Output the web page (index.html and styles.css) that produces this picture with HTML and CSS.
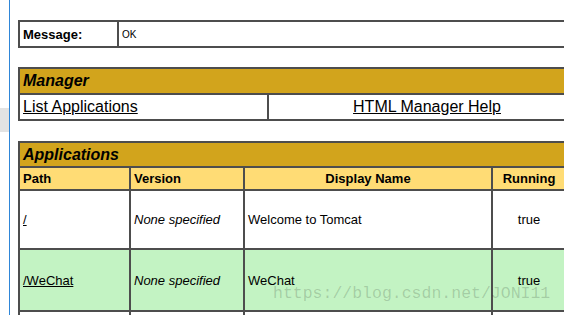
FILE: index.html
```html
<!DOCTYPE html>
<html lang="en">
<head>
  <meta charset="UTF-8">
  <title>Tomcat Web Application Manager</title>
  <link rel="stylesheet" href="styles.css">
</head>
<body>
  <div class="side">
    <div class="side-tab"></div>
  </div>
  <div class="main">
    <table class="msg">
      <colgroup>
        <col class="w-label">
        <col class="w-msg">
      </colgroup>
      <tr>
        <td><b>Message:</b></td>
        <td class="msg-text">OK</td>
      </tr>
    </table>

    <table class="mgr">
      <colgroup>
        <col class="w-half">
        <col class="w-half2">
      </colgroup>
      <tr>
        <td class="title" colspan="2">Manager</td>
      </tr>
      <tr class="row-link">
        <td><a href="#">List Applications</a></td>
        <td class="center"><a href="#">HTML Manager Help</a></td>
      </tr>
    </table>

    <table class="apps">
      <colgroup>
        <col class="w-path">
        <col class="w-ver">
        <col class="w-name">
        <col class="w-run">
        <col class="w-sess">
      </colgroup>
      <tr>
        <td class="title" colspan="5">Applications</td>
      </tr>
      <tr class="head">
        <td>Path</td>
        <td>Version</td>
        <td class="center">Display Name</td>
        <td class="center">Running</td>
        <td class="center">Sessions</td>
      </tr>
      <tr class="row row-a">
        <td><a href="#">/</a></td>
        <td><i>None specified</i></td>
        <td>Welcome to Tomcat</td>
        <td class="center">true</td>
        <td class="center"><a href="#">0</a></td>
      </tr>
      <tr class="row row-b">
        <td><a href="#">/WeChat</a></td>
        <td><i>None specified</i></td>
        <td>WeChat</td>
        <td class="center">true</td>
        <td class="center"><a href="#">0</a></td>
      </tr>
      <tr class="row row-a">
        <td><a href="#">/docs</a></td>
        <td><i>None specified</i></td>
        <td>Tomcat Documentation</td>
        <td class="center">true</td>
        <td class="center"><a href="#">0</a></td>
      </tr>
    </table>

    <div class="watermark">https://blog.csdn.net/JONI11</div>
  </div>
</body>
</html>
```

FILE: styles.css
```css
html, body {
  margin: 0;
  padding: 0;
  background: #fff;
}
body {
  display: flex;
  height: 315px;
  overflow: hidden;
  font-family: "Liberation Sans", Arial, sans-serif;
  color: #000;
}
.side {
  width: 9px;
  flex: none;
}
.side-tab {
  margin-top: 108px;
  height: 24px;
  background: #e3e3e3;
}
.main {
  flex: 1;
  min-width: 0;
  border-left: 1px solid #2f86d8;
  padding: 20px 0 0 8px;
  overflow: hidden;
  position: relative;
}
table {
  border-collapse: separate;
  border-spacing: 0;
  table-layout: fixed;
  border-top: 2px solid #4d4d4d;
  border-left: 2px solid #4d4d4d;
}
td {
  box-sizing: border-box;
  border-right: 2px solid #4d4d4d;
  border-bottom: 2px solid #4d4d4d;
  padding: 0 3px;
  font-size: 13px;
  white-space: nowrap;
  overflow: hidden;
  vertical-align: middle;
}
a {
  color: #000;
}
.center {
  text-align: center;
}

/* message */
.msg {
  width: 569px;
  margin-bottom: 19px;
}
.msg td {
  height: 26px;
}
.w-label {
  width: 99px;
}
.w-msg {
  width: 468px;
}
.msg-text {
  font-size: 10px;
}

/* manager */
.mgr {
  width: 569px;
  margin-bottom: 20px;
}
.mgr td {
  height: 26px;
}
.w-half {
  width: 249px;
}
.w-half2 {
  width: 318px;
}
.row-link td {
  font-size: 16px;
}
.title {
  background: #d2a41c;
  font-size: 16px;
  font-weight: bold;
  font-style: italic;
}

/* applications */
.apps {
  width: 649px;
}
.apps .title {
  height: 25px;
}
.w-path {
  width: 111px;
}
.w-ver {
  width: 114px;
}
.w-name {
  width: 248px;
}
.w-run {
  width: 74px;
}
.w-sess {
  width: 100px;
}
.head td {
  background: #ffdc75;
  font-weight: bold;
  height: 23px;
}
.row td {
  height: 59px;
}
.row-b td {
  background: #c3f3c3;
  height: 62px;
}

.watermark {
  position: absolute;
  left: 263px;
  top: 284px;
  font-family: "Liberation Mono", "DejaVu Sans Mono", monospace;
  font-size: 16.5px;
  color: rgba(0, 0, 0, 0.17);
  white-space: nowrap;
  pointer-events: none;
}
```
